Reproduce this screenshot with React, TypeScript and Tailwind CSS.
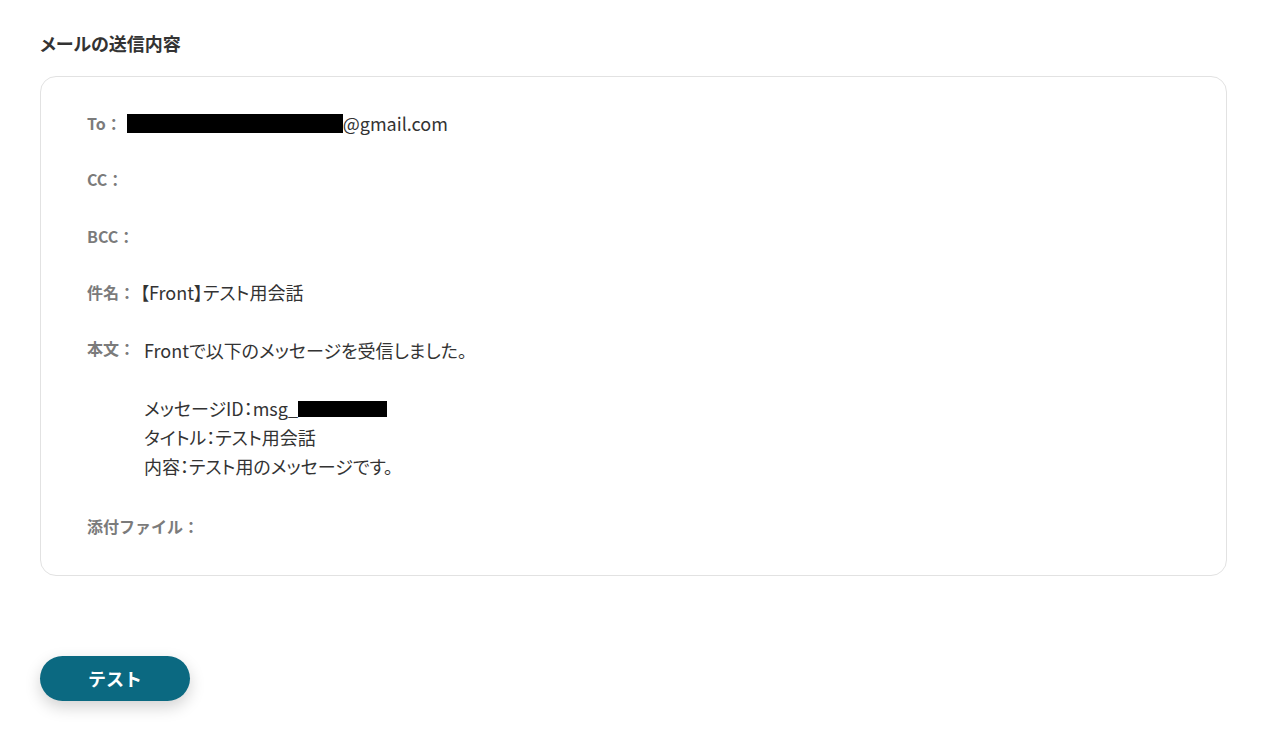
import React from "react";

const Row = ({ label, children, className = "" }: { label: string; children?: React.ReactNode; className?: string }) => (
  <div className={`flex items-start ${className}`}>
    <span className="text-[16px] leading-[26px] font-bold text-[#7b7b7b] whitespace-nowrap [font-feature-settings:normal]">{label}</span>
    {children}
  </div>
);

export default function App() {
  return (
    <div
      className="min-h-[738px] bg-white px-10 pt-[30px] text-[18px] text-[#333]"
      style={{ fontFamily: '"Noto Sans CJK JP", "Noto Sans", sans-serif' }}
    >
      <h2 className="text-[18px] font-bold text-[#333] leading-[26px] [font-feature-settings:'palt']">メールの送信内容</h2>
      <div className="mt-[20px] h-[500px] rounded-[16px] border border-[#e2e2e2] pl-[46px] pt-[33px] leading-[26px] [font-feature-settings:'palt']">
        <Row label="To：">
          <span className="ml-[5px] flex items-center">
            <span className="inline-block h-[19px] w-[216px] bg-black" />
            <span>@gmail.com</span>
          </span>
        </Row>
        <Row label="CC：" className="mt-[30px]" />
        <Row label="BCC：" className="mt-[31px]" />
        <Row label="件名：" className="mt-[30px]">
          <span className="ml-[5px]">【Front】テスト用会話</span>
        </Row>
        <Row label="本文：" className="mt-[30px]">
          <div className="ml-[9px] mt-[1px] leading-[29px]">
            <div>Frontで以下のメッセージを受信しました。</div>
            <div className="h-[29px]" />
            <div className="flex items-center">
              メッセージID：msg_<span className="inline-block h-[16px] w-[89px] bg-black" />
            </div>
            <div>タイトル：テスト用会話</div>
            <div>内容：テスト用のメッセージです。</div>
          </div>
        </Row>
        <Row label="添付ファイル：" className="mt-[32px]" />
      </div>
      <button className="mt-[80px] h-[45px] w-[150px] rounded-full bg-[#0b6981] text-[18px] font-bold text-white shadow-[0_6px_16px_rgba(0,0,0,0.18)]">
        テスト
      </button>
    </div>
  );
}
